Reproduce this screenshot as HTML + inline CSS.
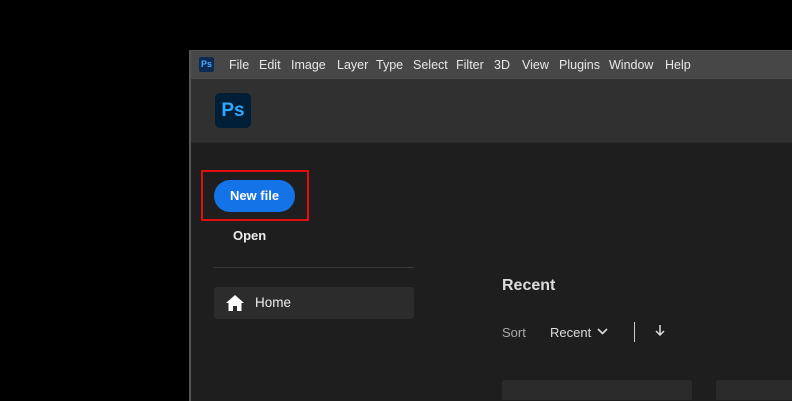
<!DOCTYPE html>
<html><head><style>
body{margin:0;width:792px;height:400px;background:#000;overflow:hidden;font-family:"Liberation Sans",sans-serif;position:relative}
.win{position:absolute;left:189px;top:50px;width:603px;height:350px;background:#1e1e1e;border-left:2px solid #555;border-top:1px solid #555}
.menu{position:absolute;left:0;top:0;width:603px;height:28px;background:#474747;color:#e8e8e8;font-size:12.5px}
.menu span{position:absolute;top:7px}
.hdr{position:absolute;left:0;top:28px;width:603px;height:63px;background:#303030;border-bottom:1px solid #2a2a2a}
.t{position:absolute;color:#eee}
</style></head><body>
<div class="win">
<div class="menu">
<div style="position:absolute;left:8px;top:6px;width:15px;height:15px;background:#0d2c53;border-radius:2px;color:#4ba7ff;font-size:9px;font-weight:bold;text-align:center;line-height:15px">Ps</div>
<span style="left:38px">File</span><span style="left:68px">Edit</span><span style="left:100px">Image</span><span style="left:146px">Layer</span><span style="left:185px">Type</span><span style="left:222px">Select</span><span style="left:265px">Filter</span><span style="left:303px">3D</span><span style="left:331px">View</span><span style="left:368px">Plugins</span><span style="left:418px">Window</span><span style="left:474px">Help</span>
</div>
<div class="hdr"><div style="position:absolute;left:24px;top:14px;width:36px;height:35px;background:#001e36;border-radius:5px;color:#31a8ff;font-weight:bold;font-size:19px;text-align:center;line-height:35px">Ps</div></div>
</div>
<div style="position:absolute;left:201px;top:170px;width:108px;height:51px;border:2.5px solid #e01010;box-sizing:border-box"></div>
<div style="position:absolute;left:214px;top:180px;width:81px;height:32px;background:#1473e6;border-radius:16px;color:#fff;font-weight:bold;font-size:13px;text-align:center;line-height:32px">New file</div>
<div class="t" style="left:233px;top:228px;font-size:13px;font-weight:bold">Open</div>
<div style="position:absolute;left:214px;top:267px;width:200px;height:1px;background:#3a3a3a"></div>
<div style="position:absolute;left:214px;top:287px;width:200px;height:32px;background:#2c2c2c;border-radius:3px"></div>
<svg style="position:absolute;left:226px;top:295px" width="18" height="16" viewBox="0 0 18 16"><path d="M9 0L0 8h2.5v8h4.5v-5h4v5h4.5V8H18z" fill="#fff"/></svg>
<div class="t" style="left:255px;top:295px;font-size:13.5px">Home</div>
<div class="t" style="left:502px;top:277px;font-size:16px;font-weight:bold;color:#ddd">Recent</div>
<div class="t" style="left:502px;top:325px;font-size:13px;color:#aaa">Sort</div>
<div class="t" style="left:550px;top:325px;font-size:13px;color:#ddd">Recent</div>
<svg style="position:absolute;left:597px;top:328px" width="11" height="8"><path d="M1 1l4.5 4.5L10 1" stroke="#ddd" stroke-width="1.6" fill="none"/></svg>
<div style="position:absolute;left:634px;top:322px;width:1px;height:20px;background:#ccc"></div>
<svg style="position:absolute;left:655px;top:325px" width="10" height="12"><path d="M5 0v10M1 6l4 4 4-4" stroke="#ddd" stroke-width="1.5" fill="none"/></svg>
<div style="position:absolute;left:502px;top:380px;width:190px;height:20px;background:#2b2b2b;border-radius:3px 3px 0 0"></div>
<div style="position:absolute;left:716px;top:380px;width:80px;height:20px;background:#2b2b2b;border-radius:3px 0 0 0"></div>
</body></html>
